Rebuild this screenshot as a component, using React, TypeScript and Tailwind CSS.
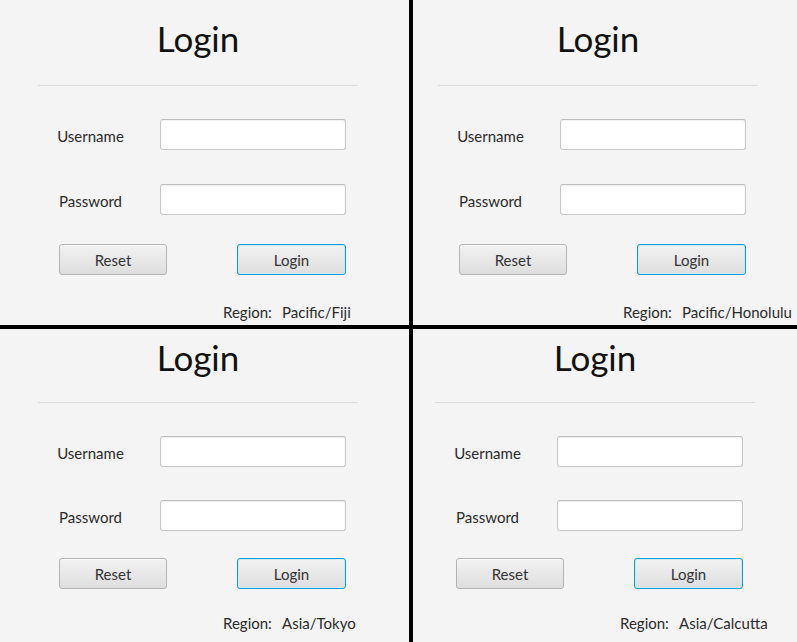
const font = { fontFamily: 'Lato, "Open Sans", sans-serif' };

type PanelProps = {
  region: string;
  shift: string;
  compact?: boolean;
};

function Field() {
  return (
    <div className="h-[31px] w-[186px] rounded-[3px] border border-[#c8c8c8] border-t-[#bcbcbc] bg-white shadow-[inset_0_1px_2px_rgba(0,0,0,0.07)]" />
  );
}

function Panel({ region, shift, compact }: PanelProps) {
  // bottom windows are a bit shorter, so the spacing is tighter
  const gaps = compact
    ? {
        title: 'mt-[11px]',
        sep: 'mt-[27px]',
        user: 'mt-[33px]',
        pass: 'mt-[33px]',
        btns: 'mt-[27px]',
        region: 'mt-[24px]',
      }
    : {
        title: 'mt-[21px]',
        sep: 'mt-[29px]',
        user: 'mt-[33px]',
        pass: 'mt-[34px]',
        btns: 'mt-[29px]',
        region: 'mt-[27px]',
      };

  return (
    <div className={`w-[410px] shrink-0 ${shift}`} style={font}>
      <div className="ml-[38px] flex w-[320px] flex-col">
        <div
          className={`${gaps.title} text-center text-[35px] leading-[35px] text-[#111]`}
        >
          Login
        </div>

        <div className={`${gaps.sep} h-px w-full bg-[#dcdcdc]`} />

        <div className={`${gaps.user} flex items-center`}>
          <div className="w-[105px] shrink-0 pt-[3px] text-center text-[15px] text-[#2b2b2b]">
            Username
          </div>
          <div className="ml-[17px]">
            <Field />
          </div>
        </div>

        <div className={`${gaps.pass} flex items-center`}>
          <div className="w-[105px] shrink-0 pt-[3px] text-center text-[15px] text-[#2b2b2b]">
            Password
          </div>
          <div className="ml-[17px]">
            <Field />
          </div>
        </div>

        <div className={`${gaps.btns} flex items-center`}>
          <button className="ml-[21px] h-[31px] w-[108px] shrink-0 rounded-[3px] border border-[#b3b3b3] bg-gradient-to-b from-[#f2f2f2] to-[#dedede] pt-[1px] text-[15px] text-[#333] shadow-[inset_0_1px_0_rgba(255,255,255,0.7)]">
            Reset
          </button>
          <button className="ml-[70px] h-[31px] w-[109px] shrink-0 rounded-[3px] border border-[#039ed3] bg-gradient-to-b from-[#f2f2f2] to-[#dedede] pt-[1px] text-[15px] text-[#333] shadow-[inset_0_0_0_1px_#cdebf6]">
            Login
          </button>
        </div>

        <div
          className={`${gaps.region} ml-[185px] flex h-[20px] items-center whitespace-nowrap text-[15px] text-[#2b2b2b]`}
        >
          <span className="w-[59px] shrink-0">Region:</span>
          <span className="shrink-0">{region}</span>
        </div>
      </div>
    </div>
  );
}

export default function App() {
  return (
    <div className="grid h-[642px] w-[797px] grid-cols-[409px_384px] grid-rows-[325px_313px] gap-[4px] bg-black">
      <div className="flex overflow-hidden bg-[#f4f4f4]">
        <Panel region="Pacific/Fiji" shift="ml-0" />
      </div>
      <div className="flex overflow-hidden bg-[#f4f4f4]">
        <Panel region="Pacific/Honolulu" shift="-ml-[13px]" />
      </div>
      <div className="flex overflow-hidden bg-[#f4f4f4]">
        <Panel region="Asia/Tokyo" shift="ml-0" compact />
      </div>
      <div className="flex overflow-hidden bg-[#f4f4f4]">
        <Panel region="Asia/Calcutta" shift="-ml-[16px]" compact />
      </div>
    </div>
  );
}
